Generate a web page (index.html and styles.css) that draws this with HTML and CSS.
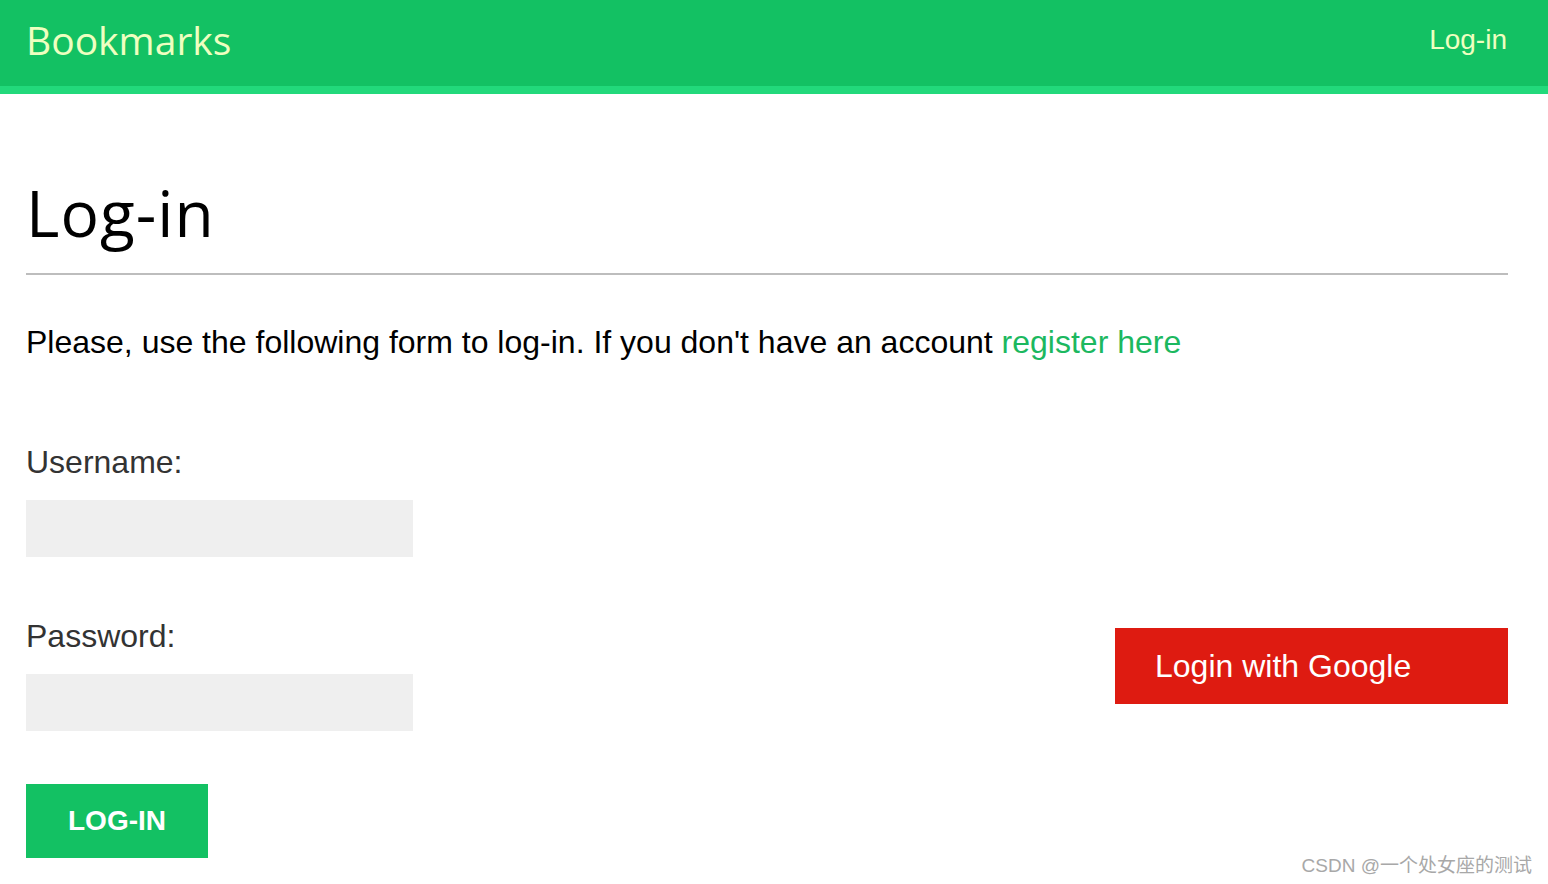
FILE: index.html
```html
<!DOCTYPE html>
<html lang="en">
<head>
<meta charset="utf-8">
<title>Log-in</title>
<link rel="stylesheet" href="styles.css">
</head>
<body>
<header class="header">
  <span class="logo">Bookmarks</span>
  <a class="user-link" href="#">Log-in</a>
</header>
<main class="content">
  <h1 class="title">Log-in</h1>
  <p class="intro">Please, use the following form to log-in. If you don't have an account <a class="link" href="#">register here</a></p>
  <div class="row">
    <form class="login-form">
      <label class="field-label" for="username">Username:</label>
      <input class="field-input" id="username" type="text">
      <label class="field-label field-label-second" for="password">Password:</label>
      <input class="field-input" id="password" type="password">
      <button class="submit" type="button">Log-in</button>
    </form>
    <div class="social">
      <a class="google" href="#">Login with Google</a>
    </div>
  </div>
</main>
<div class="watermark">CSDN @一个处女座的测试</div>
</body>
</html>
```

FILE: styles.css
```css
html, body {
  margin: 0;
  padding: 0;
  background: #fff;
}
body {
  font-family: "Liberation Sans", Arial, sans-serif;
  color: #000;
  position: relative;
  min-height: 884px;
  overflow: hidden;
}
.header {
  height: 86px;
  background: #13c163;
  border-bottom: 8px solid #22d97b;
  display: flex;
  justify-content: space-between;
  align-items: flex-start;
  padding: 0 41px 0 26px;
}
.logo {
  font-family: "Open Sans", sans-serif;
  font-size: 39px;
  line-height: 40px;
  margin-top: 20px;
  color: #eeffc0;
}
.user-link {
  font-family: "Liberation Sans", Arial, sans-serif;
  font-size: 28px;
  line-height: 28px;
  margin-top: 26px;
  color: #eeffc0;
  text-decoration: none;
}
.content {
  padding: 0 40px 0 26px;
}
.title {
  font-family: "Open Sans", sans-serif;
  font-weight: normal;
  font-size: 64px;
  line-height: 64px;
  letter-spacing: 1px;
  margin: 87px 0 0;
  padding-bottom: 28px;
  border-bottom: 2px solid #bdbdbd;
}
.intro {
  font-size: 32px;
  line-height: 40px;
  margin: 47px 0 0;
}
.link {
  color: #1cb85f;
  text-decoration: none;
}
.row {
  display: flex;
  justify-content: space-between;
  align-items: flex-start;
}
.login-form {
  display: flex;
  flex-direction: column;
  align-items: flex-start;
  padding-top: 80px;
}
.field-label {
  font-size: 32px;
  line-height: 40px;
  color: #333;
}
.field-label-second {
  margin-top: 59px;
}
.field-input {
  box-sizing: border-box;
  width: 387px;
  height: 57px;
  margin-top: 18px;
  border: 0;
  background: #efefef;
  padding: 0 10px;
  font-size: 24px;
}
.submit {
  margin-top: 53px;
  width: 182px;
  height: 74px;
  border: 0;
  background: #13c163;
  color: #fff;
  font-family: "Liberation Sans", Arial, sans-serif;
  font-weight: bold;
  font-size: 28px;
  text-transform: uppercase;
  padding: 0;
}
.social {
  margin-top: 266px;
}
.google {
  display: block;
  box-sizing: border-box;
  width: 393px;
  height: 76px;
  background: #de1b11;
  color: #fff;
  font-size: 32px;
  line-height: 76px;
  padding-left: 40px;
  text-decoration: none;
}
.watermark {
  position: absolute;
  right: 16px;
  bottom: 6px;
  font-family: "Liberation Sans", "Noto Sans CJK SC", sans-serif;
  font-size: 19px;
  line-height: 24px;
  color: #a8a8a8;
}
```
